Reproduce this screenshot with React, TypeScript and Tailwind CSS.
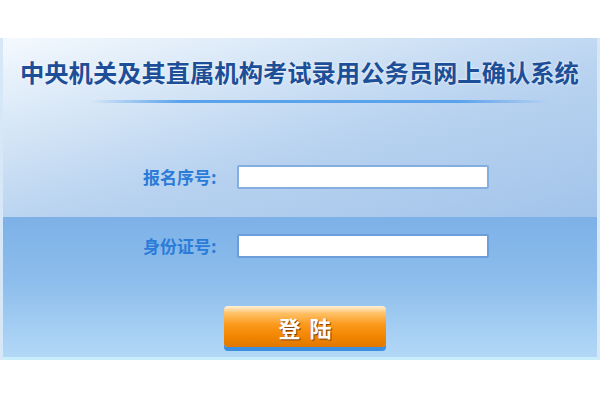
export default function App() {
  const cjk = { fontFamily: '"Noto Sans CJK SC", "Noto Sans", sans-serif' };

  return (
    <div className="flex h-[400px] w-[600px] flex-col bg-white" style={cjk}>
      <div className="h-[38px] shrink-0 bg-white" />

      <div className="flex h-[322px] shrink-0 flex-col border-r-[3px] border-l-[3px] border-[#d6e8f8]">
        {/* upper band: title + first field */}
        <div className="flex h-[179px] flex-col bg-[linear-gradient(165deg,#f4f9fe_0%,#d9e8f7_25%,#b9d3f0_55%,#a2c4ea_100%)]">
          <h1 className="mt-[20px] h-7 pl-[17px] text-[24.3px] font-bold leading-7 whitespace-nowrap text-[#1d4f98] [text-shadow:0_0_3px_rgba(255,255,255,0.9)]">
            中央机关及其直属机构考试录用公务员网上确认系统
          </h1>
          <div className="mt-[14px] ml-[87px] h-[3px] w-[460px] rounded-full bg-[linear-gradient(90deg,rgba(90,160,235,0)_0%,#5aa2ec_20%,#5aa2ec_80%,rgba(90,160,235,0)_100%)]" />
          <div className="mt-[62px] flex h-6 items-center pl-[140px]">
            <span className="w-[94px] text-[17px] leading-6 font-bold text-[#2b7bd8]">报名序号:</span>
            <input className="h-[24px] w-[252px] rounded-[2px] border-2 border-[#84ade0] bg-white outline-none" />
          </div>
        </div>

        {/* lower band: second field + button */}
        <div className="flex h-[143px] flex-col bg-[linear-gradient(180deg,#7db1e7_0%,#8dbdec_45%,#b4d9f7_100%)]">
          <div className="mt-[17px] flex h-6 items-center pl-[140px]">
            <span className="w-[94px] text-[17px] leading-6 font-bold text-[#2b7bd8]">身份证号:</span>
            <input className="h-[24px] w-[252px] rounded-[2px] border-2 border-[#6d9ed9] bg-white outline-none" />
          </div>
          <button className="mt-[48px] ml-[221px] flex h-[41px] w-[162px] shrink-0 items-center justify-center gap-[9px] rounded-[4px] bg-[linear-gradient(180deg,#fff1d8_0%,#ffc066_18%,#fb9a1c_45%,#f28500_75%,#e07800_100%)] text-[22px] leading-none font-bold text-white shadow-[0_4px_0_#3c8fe0] [text-shadow:1px_1px_1px_rgba(90,40,0,0.8)]">
            <span>登</span>
            <span>陆</span>
          </button>
          <div className="mt-auto h-[3px] bg-[#c8eefc]" />
        </div>
      </div>

      <div className="flex-1 bg-white" />
    </div>
  );
}
